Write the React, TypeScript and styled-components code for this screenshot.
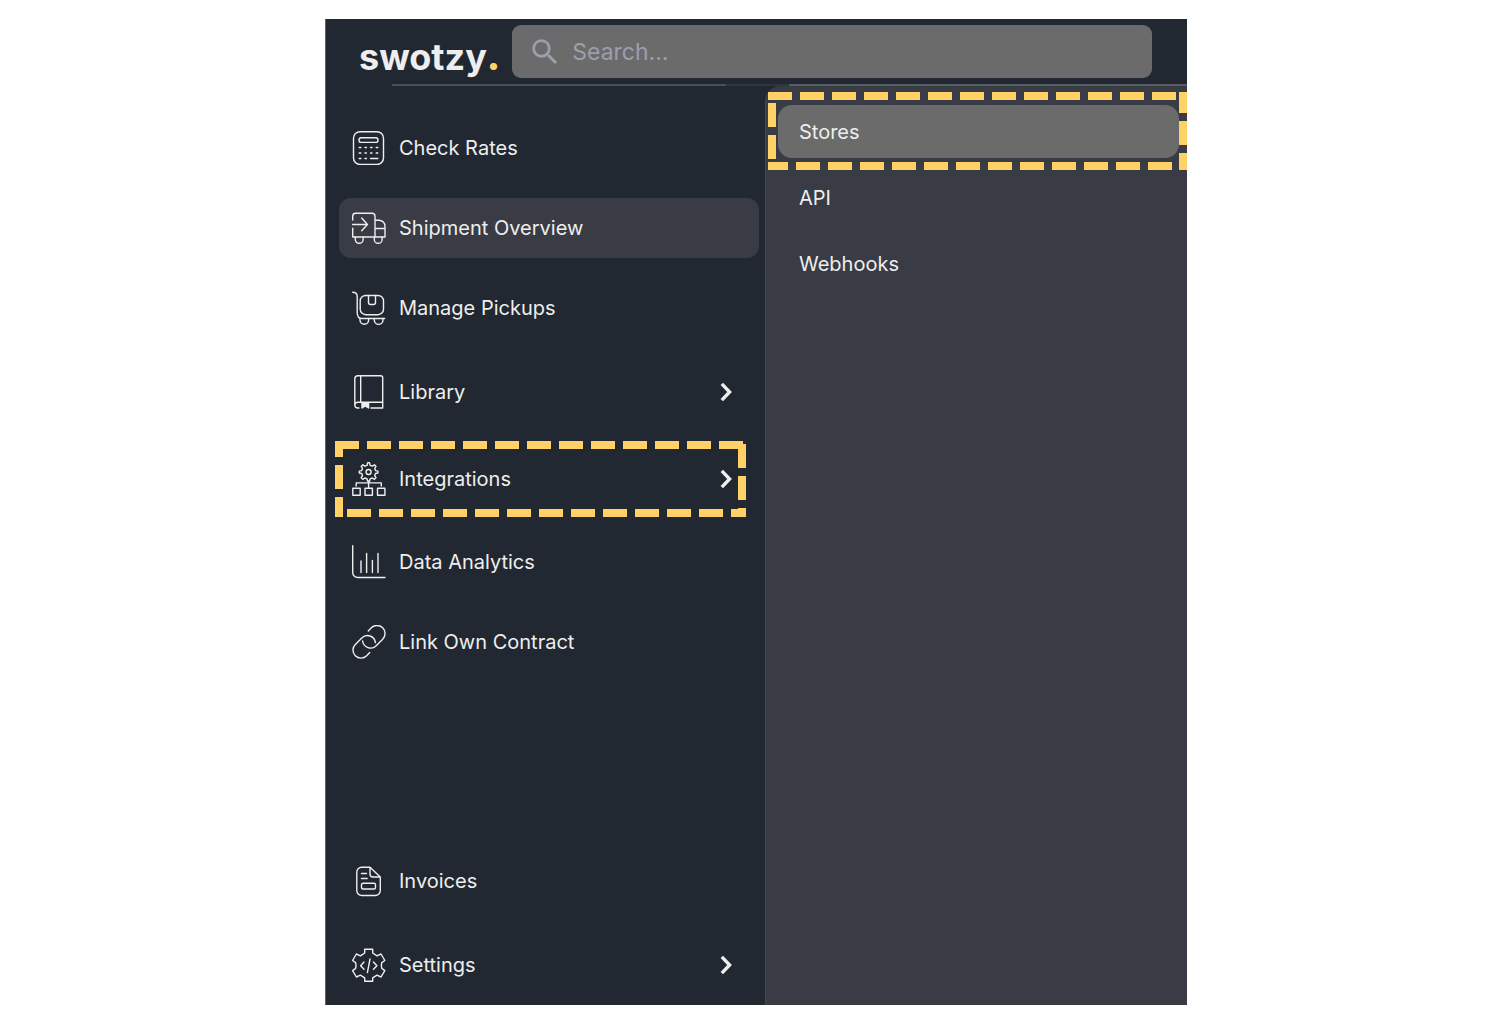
import React from "react";
import styled, { createGlobalStyle, css } from "styled-components";

const color = {
  ink: "#222831",
  panel: "#393c45",
  active: "#6b6b6b",
  line: "#4b4f57",
  lineStrong: "#595d65",
  text: "#eeeeee",
  muted: "#9b9fae",
  accent: "#ffd166",
};

const GlobalStyle = createGlobalStyle`
  *, *::before, *::after { box-sizing: border-box; }
  body {
    margin: 0;
    background: #ffffff;
    color: ${color.text};
    font-family: Inter, "Liberation Sans", sans-serif;
    font-size: 20px;
    line-height: 24px;
  }
`;

const Page = styled.div`
  display: grid;
  grid-template-columns: 325fr 862fr 313fr;
  min-height: 100vh;
  padding: 19px 0;
`;

const Shell = styled.div`
  grid-column: 2;
  display: flex;
  flex-direction: column;
  background: ${color.ink};
  border-left: 1px solid #5d626b;
`;

const Header = styled.header`
  display: flex;
  align-items: center;
  gap: 12px;
  height: 65px;
  padding: 0 35px 0 33px;
`;

const Logo = styled.a`
  display: flex;
  align-items: baseline;
  padding-top: 10px;
  color: ${color.text};
  font-size: 36px;
  font-weight: 700;
  line-height: 44px;
  text-decoration: none;
`;

const LogoDot = styled.span`
  color: ${color.accent};
  font-weight: 900;
`;

const SearchBox = styled.label`
  flex: 1;
  display: flex;
  align-items: center;
  gap: 10px;
  height: 53px;
  padding: 0 16px;
  border-radius: 9px;
  background: ${color.active};
  color: ${color.muted};
`;

const SearchInput = styled.input`
  flex: 1;
  min-width: 0;
  border: 0;
  padding: 0;
  outline: none;
  background: transparent;
  color: ${color.text};
  font: inherit;
  font-size: 23px;
  line-height: 32px;
  &::placeholder {
    color: ${color.muted};
    opacity: 1;
  }
`;

const Divider = styled.hr`
  width: calc(100% - 66px);
  height: 2px;
  margin: 0 0 0 66px;
  border: 0;
  background: linear-gradient(
    90deg,
    ${color.line} 42%,
    #30353e 42% 50%,
    ${color.lineStrong} 50%
  );
`;

const Body = styled.div`
  flex: 1;
  display: grid;
  grid-template-columns: 439fr 422fr;
`;

const Sidebar = styled.nav`
  display: flex;
  flex-direction: column;
  justify-content: space-between;
  padding: 32px 6px 7px 13px;
`;

const MenuList = styled.ul`
  display: flex;
  flex-direction: column;
  gap: 20px;
  margin: 0;
  padding: 0;
  list-style: none;
`;

const MenuItem = styled.li`
  position: relative;
`;

const rowStyle = css`
  display: flex;
  align-items: center;
  gap: 13px;
  width: 100%;
  padding: 0 27px 0 13px;
  border: 0;
  border-radius: 12px;
  color: ${color.text};
  font: inherit;
  text-align: left;
  text-decoration: none;
  cursor: pointer;
`;

const MenuLink = styled.a<{ $active?: boolean }>`
  ${rowStyle}
  height: 60px;
  background: ${(p) => (p.$active ? color.panel : "transparent")};
`;

const MenuButton = styled.button`
  ${rowStyle}
  height: 67px;
  background: transparent;
`;

const MenuText = styled.span`
  flex: 1;
`;

const Submenu = styled.nav`
  padding: 19px 8px 19px 12px;
  border-left: 1px solid #454851;
  border-top-left-radius: 16px;
  background: ${color.panel};
`;

const SubmenuList = styled(MenuList)`
  gap: 13px;
`;

const SubmenuLink = styled.a<{ $active?: boolean }>`
  display: flex;
  align-items: center;
  height: 53px;
  padding: 0 21px;
  border-radius: 14px;
  background: ${(p) => (p.$active ? color.active : "transparent")};
  color: ${color.text};
  text-decoration: none;
`;

type Dashes = { top: number; right: number; bottom: number; left: number };

/* Dashed callout frame laid over a menu row; every side has its own dash phase. */
const Callout = styled.span<{ $inset: string; $phase: Dashes }>`
  --across: linear-gradient(90deg, ${color.accent} 24px, transparent 24px);
  --down: linear-gradient(180deg, ${color.accent} 24px, transparent 24px);
  position: absolute;
  inset: ${(p) => p.$inset};
  pointer-events: none;
  background-image: var(--across), var(--down), var(--across), var(--down);
  background-size: 32px 8px, 8px 32px, 32px 8px, 8px 32px;
  background-repeat: repeat-x, repeat-y, repeat-x, repeat-y;
  background-position:
    ${(p) => p.$phase.top}px top,
    right ${(p) => p.$phase.right}px,
    ${(p) => p.$phase.bottom}px bottom,
    left ${(p) => p.$phase.left}px;
`;

const Icon = styled.svg`
  flex: none;
  width: 34px;
  height: 34px;
  fill: none;
  stroke: currentColor;
  stroke-width: 1.4;
  stroke-linecap: round;
  stroke-linejoin: round;
`;

const SearchGlyph = styled.svg`
  flex: none;
  width: 34px;
  height: 34px;
  fill: currentColor;
`;

const ChevronGlyph = styled.svg`
  flex: none;
  width: 12px;
  height: 20px;
  fill: none;
  stroke: currentColor;
  stroke-width: 3.4;
`;

const drawings = {
  rates: (
    <>
      <rect x="1.5" y="0.7" width="30" height="32.8" rx="6.5" />
      <rect x="7" y="6.8" width="19" height="4.6" rx="2.2" />
      <path d="M7.2 16.5h1.6M13 16.5h1.4M18.6 16.5h1.4M24.2 16.5h1.6M7.2 22h1.6M13 22h1.4M18.6 22h1.4M24.2 22h1.6M7.2 27.5h1.6M13 27.5h1.4M18.6 27.5h7.2" />
    </>
  ),
  shipment: (
    <>
      <path d="M.7 9V5A3 3 0 0 1 3.7 2.2H20A3 3 0 0 1 23 5.2V26M.7 17.3V26H33V15.5C33 12 30.5 9.2 27 9.2H23M23 17.5H33" />
      <path d="M.5 13.5H15.2M9.7 7L15.4 13.5L9.7 19.7" />
      <path d="M3.3 26.2V28.4A3.9 3.9 0 0 0 11.1 28.4V26.2M22.3 26.2V28.4A3.9 3.9 0 0 0 30.1 28.4V26.2" />
    </>
  ),
  pickups: (
    <>
      <path d="M.7 1.2C3.6 1.2 5.2 2.7 5.2 5.5V21.5C5.2 25 7 27.5 10 27.5H32.7" />
      <rect x="8.2" y="4.5" width="23.3" height="19.2" rx="5.5" />
      <path d="M16.5 4.5V11.5A2 2 0 0 0 18.5 13.5H21.5A2 2 0 0 0 23.5 11.5V4.5" />
      <path d="M8 27.5V29A4.2 4.2 0 0 0 16.6 29V27.5M22.3 27.5V29A4.2 4.2 0 0 0 31 29V27.5" />
    </>
  ),
  library: (
    <>
      <path d="M7 33H6A3.2 3.2 0 0 1 2.8 29.8V3.8A3.2 3.2 0 0 1 6 .7H28.7A2 2 0 0 1 30.7 2.7V33H19M8.7 .7V27.3M2.8 30.3C2.8 28.5 4.2 27.3 6 27.3H30.7" />
      <path d="M10 28V33L13.3 30.8L16.6 33V28Z" fill="currentColor" />
    </>
  ),
  integrations: (
    <>
      <path d="M15.1 3.3L15.6 .8H17.6L18.1 3.3L20.3 4.2L22.4 2.8L24 4.4L22.7 6.5L23.5 8.6L25.9 9.1V11L23.5 11.5L22.7 13.6L24 15.7L22.4 17.3L20.3 16L18.1 16.9L17.6 19.2H15.6L15.1 16.9L12.9 16L10.8 17.3L9.2 15.7L10.5 13.6L9.7 11.5L7.3 11V9.1L9.7 8.6L10.5 6.5L9.2 4.4L10.8 2.8L12.9 4.2Z" />
      <circle cx="16.6" cy="10" r="2.5" />
      <path d="M16.6 19.2V26M4.2 24V20.9H29.3V24" />
      <path d="M.8 26.3H8.2V33.3H.8ZM13 26.3H20.4V33.3H13ZM25.5 26.3H32.9V33.3H25.5Z" />
    </>
  ),
  analytics: (
    <path d="M.7 .7V27.5A5 5 0 0 0 5.7 32.5H33M9 16V27.5M14.6 8.5V27.5M20.4 15.5V27.5M26 8.5V27.5" />
  ),
  contract: (
    <path d="M16.3 6L19.3 2.8A8 8 0 0 1 30.7 14.2L24.2 20.7A8 8 0 0 1 10.6 16M17.7 27.6L14.7 30.8A8 8 0 0 1 3.3 19.4L9.8 12.9A8 8 0 0 1 23.4 17.6" />
  ),
  invoices: (
    <>
      <path d="M9.5 3.3H18L28.3 13V26.5A5 5 0 0 1 23.3 31.5H9.8A5 5 0 0 1 4.8 26.5V8A4.7 4.7 0 0 1 9.5 3.3ZM18 3.3V10A3 3 0 0 0 21 13H28.3M9.5 9.5H14.5M9.5 14.5H15.2" />
      <rect x="9.5" y="19.2" width="14" height="5.8" rx="1.5" />
    </>
  ),
  settings: (
    <>
      <path d="M12.7 1.3H20.7V5L25 7.8L29 6L32.8 12.5L29.8 14.6C29.3 16.5 29.3 18.5 29.8 20.4L32.8 22.6L29 29L25 27.2L20.7 29.8V33.3H12.7V29.8L8.4 27.2L4.4 29L.6 22.6L3.6 20.4C4.1 18.5 4.1 16.5 3.6 14.6L.6 12.5L4.4 6L8.4 7.8L12.7 5Z" />
      <path d="M12 14L8.6 17.7L12 21.3M21.5 14L24.9 17.7L21.5 21.3M18 11L15.4 24.6" />
    </>
  ),
};

type IconName = keyof typeof drawings;

type Entry = {
  label: string;
  icon: IconName;
  active?: boolean;
  expandable?: boolean;
  callout?: boolean;
};

const mainEntries: Entry[] = [
  { label: "Check Rates", icon: "rates" },
  { label: "Shipment Overview", icon: "shipment", active: true },
  { label: "Manage Pickups", icon: "pickups" },
  { label: "Library", icon: "library", expandable: true },
  { label: "Integrations", icon: "integrations", expandable: true, callout: true },
  { label: "Data Analytics", icon: "analytics" },
  { label: "Link Own Contract", icon: "contract" },
];

const footerEntries: Entry[] = [
  { label: "Invoices", icon: "invoices" },
  { label: "Settings", icon: "settings", expandable: true },
];

const integrationEntries = ["Stores", "API", "Webhooks"];

function MenuIcon({ name }: { name: IconName }) {
  return (
    <Icon viewBox="0 0 34 34" aria-hidden="true">
      {drawings[name]}
    </Icon>
  );
}

function MenuRow({ entry }: { entry: Entry }) {
  return (
    <MenuItem>
      {entry.expandable ? (
        <MenuButton type="button" aria-expanded={Boolean(entry.callout)}>
          <MenuIcon name={entry.icon} />
          <MenuText>{entry.label}</MenuText>
          <ChevronGlyph viewBox="0 0 12 20" aria-hidden="true">
            <path d="M1.8 1.8L9.6 10L1.8 18.2" />
          </ChevronGlyph>
        </MenuButton>
      ) : (
        <MenuLink href="#" $active={entry.active}>
          <MenuIcon name={entry.icon} />
          <MenuText>{entry.label}</MenuText>
        </MenuLink>
      )}
      {entry.callout && (
        <Callout
          $inset="-4px 13px -5px -4px"
          $phase={{ top: 0, right: 3, bottom: 12, left: 24 }}
        />
      )}
    </MenuItem>
  );
}

export default function App() {
  return (
    <>
      <GlobalStyle />
      <Page>
        <Shell>
          <Header>
            <Logo href="#" aria-label="swotzy.">
              <span>swotzy</span>
              <LogoDot>.</LogoDot>
            </Logo>
            <SearchBox>
              <SearchGlyph viewBox="0 0 24 24" aria-hidden="true">
                <path d="M15.5 14h-.79l-.28-.27A6.471 6.471 0 0 0 16 9.5 6.5 6.5 0 1 0 9.5 16c1.61 0 3.09-.59 4.23-1.57l.27.28v.79l5 4.99L20.49 19l-4.99-5zm-6 0C7.01 14 5 11.99 5 9.5S7.01 5 9.5 5 14 7.01 14 9.5 11.99 14 9.5 14z" />
              </SearchGlyph>
              <SearchInput type="search" placeholder="Search..." aria-label="Search" />
            </SearchBox>
          </Header>
          <Divider />
          <Body>
            <Sidebar aria-label="Main">
              <MenuList>
                {mainEntries.map((entry) => (
                  <MenuRow key={entry.label} entry={entry} />
                ))}
              </MenuList>
              <MenuList>
                {footerEntries.map((entry) => (
                  <MenuRow key={entry.label} entry={entry} />
                ))}
              </MenuList>
            </Sidebar>
            <Submenu aria-label="Integrations">
              <SubmenuList>
                {integrationEntries.map((label, index) => (
                  <MenuItem key={label}>
                    <SubmenuLink href="#" $active={index === 0}>
                      {label}
                    </SubmenuLink>
                    {index === 0 && (
                      <Callout
                        $inset="-13px -8px -12px -10px"
                        $phase={{ top: 0, right: -3, bottom: -4, left: 11 }}
                      />
                    )}
                  </MenuItem>
                ))}
              </SubmenuList>
            </Submenu>
          </Body>
        </Shell>
      </Page>
    </>
  );
}
